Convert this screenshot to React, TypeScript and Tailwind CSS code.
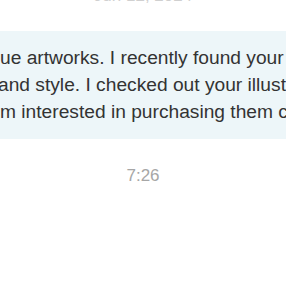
import React from "react";

export default function App() {
  return (
    <div
      className="w-[286px] h-[286px] overflow-hidden bg-white flex flex-col"
      style={{ fontFamily: '"Liberation Sans", Arial, sans-serif' }}
    >
      <div className="-mt-[14px] h-[20px] text-center text-[17px] leading-[20px] text-[#d0d0d0] whitespace-nowrap">
        Jun 12, 2024
      </div>
      <div className="mt-[25px] bg-[#edf6f9] pt-[13px] pb-[14px] text-[19.2px] leading-[27px] text-[#333333]">
        <div className="whitespace-nowrap">ue artworks. I recently found your illustrations</div>
        <div className="whitespace-nowrap -ml-[2px]">and style. I checked out your illustrations</div>
        <div className="whitespace-nowrap">m interested in purchasing them commercially</div>
      </div>
      <div className="mt-[27px] text-center text-[17px] leading-[20px] text-[#a6a6a6]">7:26</div>
    </div>
  );
}
